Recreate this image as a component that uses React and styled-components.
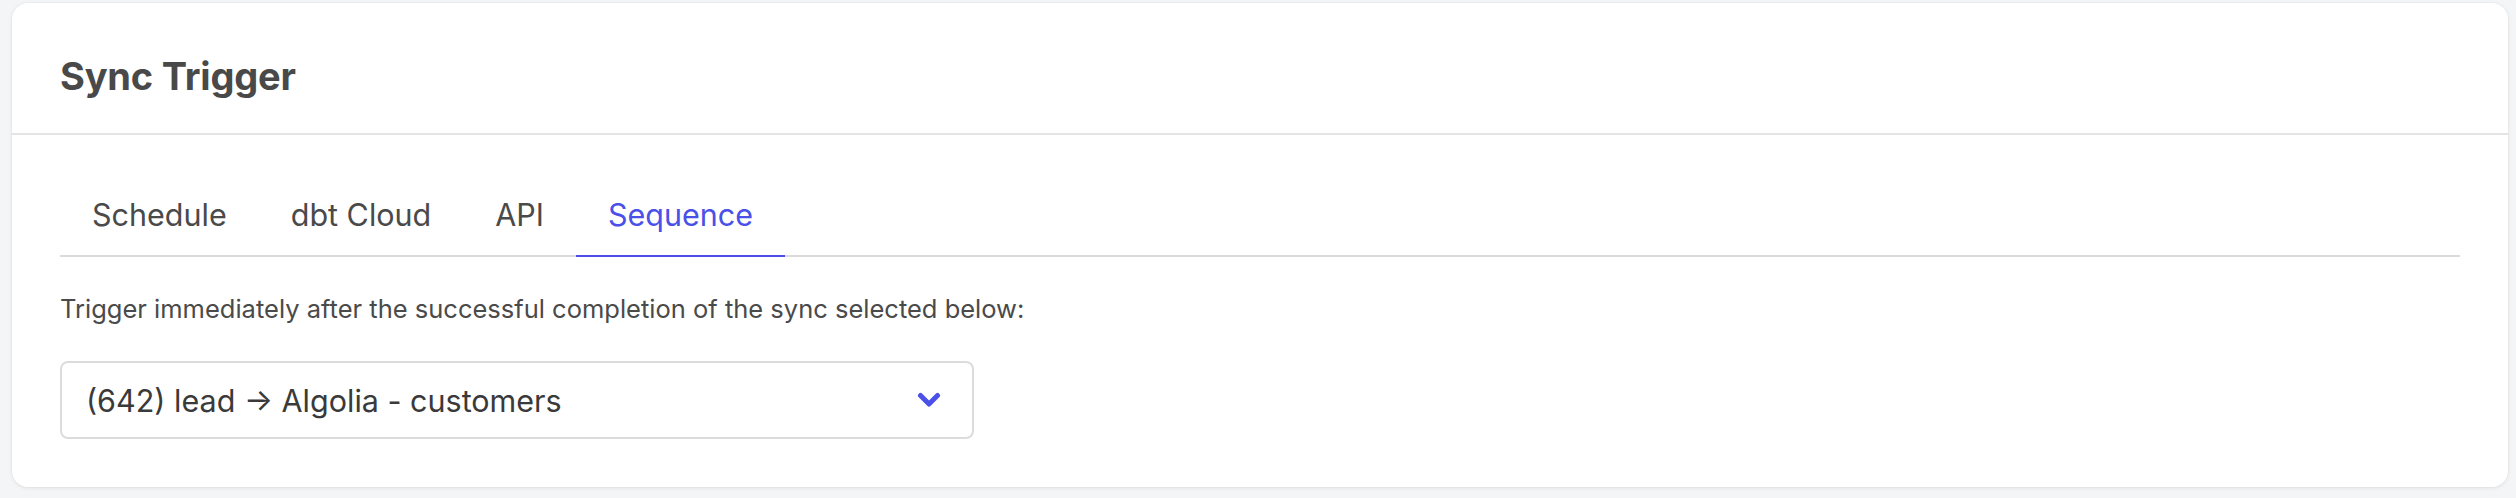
import React, { useState } from 'react'
import styled, { createGlobalStyle } from 'styled-components'

const GlobalStyle = createGlobalStyle`
  html, body {
    margin: 0;
    padding: 0;
    background: #f4f5f7;
    font-family: Inter, "Liberation Sans", Arial, sans-serif;
    -webkit-font-smoothing: antialiased;
  }
`

const Page = styled.div`
  padding: 3px 8px 11px 12px;
`

const Card = styled.section`
  background: #ffffff;
  border-radius: 16px;
  box-shadow: 0 1px 4px rgba(0, 0, 0, 0.08), 0 0 0 1px rgba(0, 0, 0, 0.02);
  overflow: hidden;
`

const CardHeader = styled.header`
  height: 130px;
  display: flex;
  align-items: center;
  padding: 0 48px;
  border-bottom: 2px solid #e4e4e4;
`

const Title = styled.h2`
  margin: 16px 0 0;
  font-size: 38px;
  font-weight: 700;
  color: #494949;
  letter-spacing: -0.2px;
`

const CardBody = styled.div`
  padding: 60px 48px 48px;
`

const TabList = styled.div`
  display: flex;
  border-bottom: 2px solid #dadada;
`

const Tab = styled.button`
  background: none;
  border: none;
  margin: 0 0 -2px;
  padding: 0 32px 20px;
  font-family: inherit;
  font-size: 30.5px;
  line-height: 40px;
  color: ${p => (p.$active ? '#4a50e8' : '#4a4a4a')};
  border-bottom: 2px solid ${p => (p.$active ? '#4a50e8' : 'transparent')};
  cursor: pointer;
`

const Hint = styled.p`
  margin: 34px 0 34px;
  font-size: 25.5px;
  line-height: 36px;
  color: #4a4a4a;
`

const Select = styled.div`
  width: 914px;
  height: 78px;
  box-sizing: border-box;
  display: flex;
  align-items: center;
  justify-content: space-between;
  padding: 0 31px 0 24px;
  border: 2px solid #dcdcdc;
  border-radius: 8px;
  font-size: 30.5px;
  color: #3a3a3a;
  cursor: pointer;
`

const Chevron = () => (
  <svg width="24" height="16" viewBox="0 0 24 16" fill="none">
    <path d="M3.5 3.5 L12 12 L20.5 3.5" stroke="#4a50e8" strokeWidth="5" strokeLinecap="round" strokeLinejoin="round" />
  </svg>
)

const tabs = ['Schedule', 'dbt Cloud', 'API', 'Sequence']

export default function App() {
  const [active, setActive] = useState('Sequence')
  return (
    <Page>
      <GlobalStyle />
      <Card>
        <CardHeader>
          <Title>Sync Trigger</Title>
        </CardHeader>
        <CardBody>
          <TabList>
            {tabs.map(t => (
              <Tab key={t} $active={t === active} onClick={() => setActive(t)}>
                {t}
              </Tab>
            ))}
          </TabList>
          <Hint>Trigger immediately after the successful completion of the sync selected below:</Hint>
          <Select>
            <span>(642) lead → Algolia - customers</span>
            <Chevron />
          </Select>
        </CardBody>
      </Card>
    </Page>
  )
}
